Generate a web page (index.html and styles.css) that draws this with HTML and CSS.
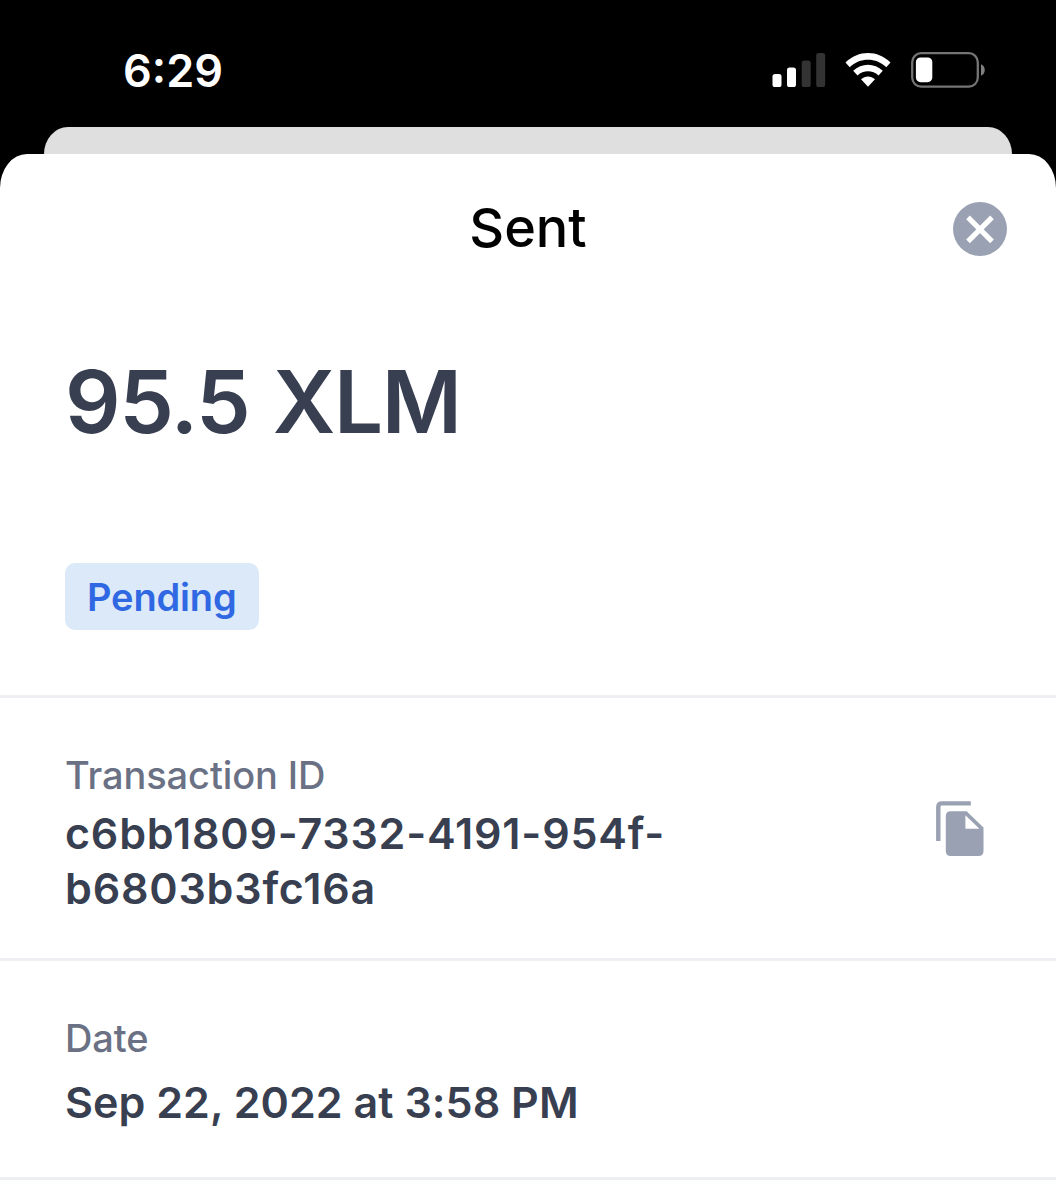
FILE: index.html
```
<!DOCTYPE html>
<html lang="en">
<head>
  <meta charset="UTF-8">
  <title>Sent</title>
  <meta name="viewport" content="width=device-width, initial-scale=1.0">
  <link rel="stylesheet" href="styles.css">
</head>
<body>
  <div class="status-bar">
    <div class="time">6:29</div>
    <div class="indicators">
      <svg class="signal" width="54" height="34" viewBox="0 0 54 34">
        <rect x="0.5" y="21" width="9" height="13" rx="2.6" fill="#fff"/>
        <rect x="15" y="14.5" width="9" height="19.5" rx="2.6" fill="#fff"/>
        <rect x="29.7" y="7.5" width="9" height="26.5" rx="2.6" fill="#333"/>
        <rect x="44.2" y="0" width="9" height="34" rx="2.6" fill="#333"/>
      </svg>
      <svg class="wifi" width="46" height="34" viewBox="0 0 46 34">
        <path d="M0.5 9.6 C13 -3.2 33 -3.2 45.5 9.6 L41.3 14.2 C31 4.3 15 4.3 4.7 14.2 Z"/>
        <path d="M8.2 17.8 C16.5 9.8 29.5 9.8 37.8 17.8 L33.5 22.4 C27.5 16.8 18.5 16.8 12.5 22.4 Z"/>
        <path d="M16 26.3 C20 22.4 26 22.4 30 26.3 L23 33.8 Z"/>
      </svg>
      <svg class="battery" width="76" height="36" viewBox="0 0 76 36">
        <rect x="1.2" y="1.2" width="65.6" height="33.4" rx="9" fill="none" stroke="#747474" stroke-width="2.3"/>
        <rect x="4.9" y="5.4" width="16.4" height="24.8" rx="4.6" fill="#fff"/>
        <path d="M70 12.3 C75 14 75 22 70 23.7 Z" fill="#808080"/>
      </svg>
    </div>
  </div>

  <div class="back-card"></div>

  <div class="sheet">
    <div class="header">
      <h1>Sent</h1>
      <button class="close" aria-label="Close">
        <svg width="54" height="54" viewBox="0 0 54 54">
          <circle cx="27" cy="27" r="27" fill="#99a1b2"/>
          <path d="M15 15.4 L39 39.4 M39 15.4 L15 39.4" stroke="#fff" stroke-width="5.2"/>
        </svg>
      </button>
    </div>

    <div class="summary">
      <div class="amount">95.5 XLM</div>
      <span class="badge">Pending</span>
    </div>

    <div class="row row-id">
      <div>
        <div class="label">Transaction ID</div>
        <div class="value">c6bb1809-7332-4191-954f-<br>b6803b3fc16a</div>
      </div>
      <button class="copy" aria-label="Copy">
        <svg width="48" height="56" viewBox="0 0 48 56">
          <path d="M2.3 40 V6 Q2.3 2.4 5.9 2.4 H34.8" fill="none" stroke="#99a1b2" stroke-width="4.4"/>
          <path fill-rule="evenodd" d="M14.8 10.2 H30.6 L47.5 26.5 V50 Q47.5 55 42.5 55 H14.8 Q9.8 55 9.8 50 V15.2 Q9.8 10.2 14.8 10.2 Z M29.4 14.2 V27.8 H43.4 Z" fill="#99a1b2"/>
        </svg>
      </button>
    </div>

    <div class="row row-date">
      <div>
        <div class="label">Date</div>
        <div class="value">Sep 22, 2022 at 3:58 PM</div>
      </div>
    </div>
  </div>
</body>
</html>
```
FILE: styles.css
```
:root {
  --ink: #383f51;
  --muted: #6b7184;
  --line: #eeeff2;
}

* {
  box-sizing: border-box;
  font-family: Inter, "Liberation Sans", sans-serif;
}

body {
  margin: 0;
  background: #000;
  height: 1200px;
  overflow: hidden;
}

button {
  display: block;
  padding: 0;
  border: none;
  background: none;
}

svg {
  display: block;
}

.status-bar {
  height: 127px;
  padding: 0 69px 0 123px;
  display: flex;
  justify-content: space-between;
}

.time {
  margin-top: 42px;
  color: #fff;
  font-size: 45px;
  font-weight: 600;
  line-height: 58px;
}

.indicators {
  display: flex;
  align-items: flex-start;
  padding-top: 53px;
}

.wifi {
  margin-left: 19px;
  fill: #fff;
}

.battery {
  margin: -1px 0 0 20px;
}

.back-card {
  height: 27px;
  margin: 0 44px;
  background: #dfdfdf;
  border-radius: 24px 24px 0 0 / 27px 27px 0 0;
}

.sheet {
  height: 1046px;
  background: #fff;
  border-radius: 27px 27px 0 0 / 34px 34px 0 0;
}

.header {
  display: grid;
  grid-template-columns: 54px 1fr 54px;
  padding: 48px 49px 0;
}

h1 {
  grid-column: 2;
  margin: -4px 0 0;
  text-align: center;
  font-size: 54px;
  font-weight: 500;
  line-height: 60px;
  color: #000;
}

.close {
  height: 54px;
}

.summary {
  height: 440px;
  padding: 92px 65px 0;
  border-bottom: 3px solid var(--line);
}

.amount {
  color: var(--ink);
  font-size: 87px;
  font-weight: 600;
  line-height: 104px;
  letter-spacing: -1.4px;
  word-spacing: 3px;
}

.badge {
  display: inline-block;
  margin-top: 109px;
  padding: 1px 22px 0;
  border-radius: 10px;
  background: #dbe9f9;
  color: #2f68e2;
  font-size: 38px;
  font-weight: 600;
  line-height: 66px;
  letter-spacing: -0.15px;
}

.row {
  display: flex;
  justify-content: space-between;
  padding: 53px 72px 0 65px;
  border-bottom: 3px solid var(--line);
}

.row-id {
  height: 263px;
}

.row-date {
  height: 219px;
}

.label {
  color: var(--muted);
  font-size: 38px;
  font-weight: 450;
  line-height: 48px;
  letter-spacing: -0.1px;
}

.value {
  margin-top: 7px;
  color: var(--ink);
  font-size: 43px;
  font-weight: 600;
  line-height: 55px;
}

.row-id .value {
  letter-spacing: 0.8px;
}

.row-date .value {
  margin-top: 13px;
  letter-spacing: 0.05px;
}

.copy {
  margin-top: 50px;
  height: 56px;
}
```
